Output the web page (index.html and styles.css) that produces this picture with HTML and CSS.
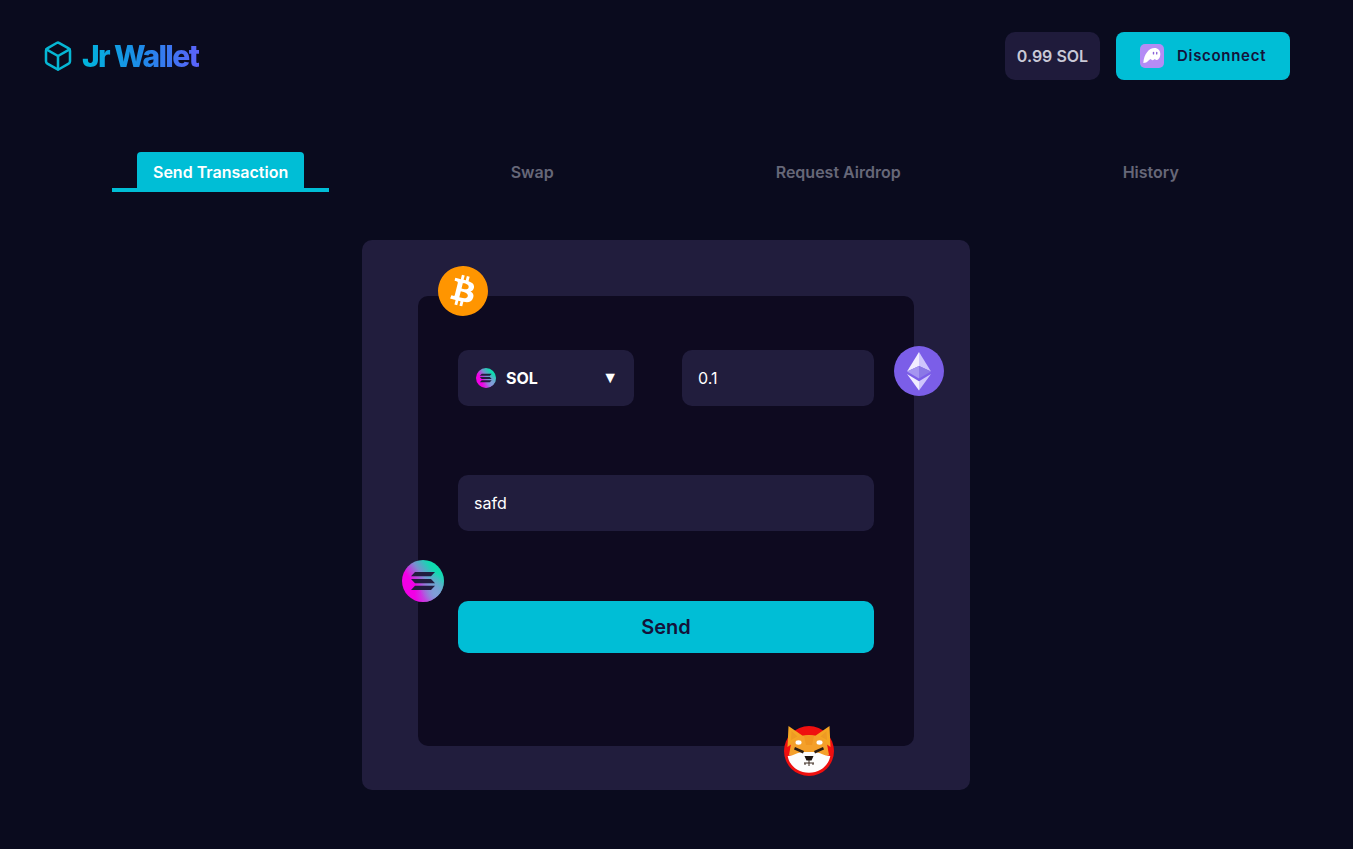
FILE: index.html
```html
<!DOCTYPE html>
<html lang="en">
<head>
  <meta charset="utf-8">
  <title>Jr Wallet</title>
  <link rel="stylesheet" href="styles.css">
</head>
<body>
  <header class="header">
    <div class="logo">
      <svg class="logo-icon" viewBox="0 0 24 24" fill="none" stroke="currentColor" stroke-width="1.9" stroke-linecap="round" stroke-linejoin="round">
        <path d="M21 16V8a2 2 0 0 0-1-1.73l-7-4a2 2 0 0 0-2 0l-7 4A2 2 0 0 0 3 8v8a2 2 0 0 0 1 1.73l7 4a2 2 0 0 0 2 0l7-4A2 2 0 0 0 21 16z"/>
        <polyline points="3.27 6.96 12 12.01 20.73 6.96"/>
        <line x1="12" y1="22.08" x2="12" y2="12"/>
      </svg>
      <span class="logo-text">Jr Wallet</span>
    </div>
    <div class="account">
      <div class="balance">0.99 SOL</div>
      <button class="disconnect">
        <svg class="phantom" viewBox="0 0 24 24">
          <rect width="24" height="24" rx="5" fill="#b48cf5"/>
          <path d="M3.300 19C4 10 9 4 14.500 4C18 4 20.300 6.500 20.300 10C20.300 13.500 18.500 16 16.500 16C15.500 16 15.200 15 14.700 15C14.200 15 13.700 16.300 12.500 16.300C11.500 16.300 11.300 15 10.700 15C9 15 8 19 3.300 19Z" fill="#fff"/>
          <rect x="12.800" y="7.800" width="1.400" height="2.800" rx=".7" fill="#8a63d8"/>
          <rect x="16" y="7.800" width="1.400" height="2.800" rx=".7" fill="#8a63d8"/>
        </svg>
        Disconnect
      </button>
    </div>
  </header>

  <nav class="tabs">
    <div class="tab active"><a>Send Transaction</a></div>
    <div class="tab"><a>Swap</a></div>
    <div class="tab"><a>Request Airdrop</a></div>
    <div class="tab"><a>History</a></div>
  </nav>

  <main class="outer-card">
    <div class="inner-card">
      <div class="row">
        <div class="select">
          <svg class="sol-small" viewBox="0 0 42 42">
            <defs>
              <linearGradient id="solSmall" x1="0.1" y1="0.75" x2="0.9" y2="0.15">
                <stop offset="0.25" stop-color="#f200e6"/>
                <stop offset="0.55" stop-color="#7a8fd0"/>
                <stop offset="0.85" stop-color="#0fdcb0"/>
              </linearGradient>
              <radialGradient id="solSmallGlow" cx="0.8" cy="0.8" r="0.5">
                <stop offset="0" stop-color="#7fa0d8"/>
                <stop offset="1" stop-color="#7fa0d8" stop-opacity="0"/>
              </radialGradient>
            </defs>
            <circle cx="21" cy="21" r="21" fill="url(#solSmall)"/>
            <circle cx="21" cy="21" r="21" fill="url(#solSmallGlow)"/>
            <path d="M12 12h21l-4 4.500H8zM8 18.700h21l4 4.500H12zM12 25.500h21l-4 4.500H8z" fill="#221c3e"/>
          </svg>
          <span class="select-label">SOL</span>
          <span class="caret">▼</span>
        </div>
        <input class="field amount" type="text" value="0.1">
      </div>
      <input class="field address" type="text" value="safd">
      <button class="send">Send</button>

      <svg class="coin coin-btc" viewBox="0 0 24 24">
        <circle cx="12" cy="12" r="9" fill="#fff"/>
        <path fill="#ff9500" d="M23.638 14.904c-1.602 6.43-8.113 10.34-14.542 8.736C2.67 22.05-1.244 15.525.362 9.105 1.962 2.67 8.475-1.243 14.9.358c6.43 1.605 10.342 8.115 8.738 14.548v-.002zm-6.35-4.613c.24-1.59-.974-2.45-2.64-3.03l.54-2.153-1.315-.33-.525 2.107c-.345-.087-.705-.167-1.064-.25l.526-2.127-1.32-.33-.54 2.165c-.285-.067-.565-.132-.84-.2l-1.815-.45-.35 1.407s.975.225.955.236c.535.136.63.486.615.766l-1.477 5.92c-.075.166-.24.406-.614.314.015.02-.96-.24-.96-.24l-.66 1.51 1.71.426.93.242-.54 2.19 1.32.327.54-2.17c.36.1.705.19 1.05.273l-.51 2.154 1.32.33.545-2.19c2.24.427 3.93.257 4.64-1.774.57-1.637-.03-2.58-1.217-3.196.854-.193 1.5-.76 1.68-1.93h.01zm-3.01 4.22c-.404 1.64-3.157.75-4.05.53l.72-2.9c.896.23 3.757.67 3.33 2.37zm.41-4.24c-.37 1.49-2.662.735-3.405.55l.654-2.64c.744.18 3.137.524 2.75 2.084v.006z"/>
      </svg>

      <svg class="coin coin-eth" viewBox="0 0 50 50">
        <circle cx="25" cy="25" r="25" fill="#7b5ee8"/>
        <polygon points="25,6 13,25.500 25,20" fill="#f1edff"/>
        <polygon points="25,6 37,25.500 25,20" fill="#cfc5fc"/>
        <polygon points="13,25.500 25,20 25,32.500" fill="#a595f0"/>
        <polygon points="37,25.500 25,20 25,32.500" fill="#8b78e6"/>
        <polygon points="13,28 25,35.200 25,44.500" fill="#f1edff"/>
        <polygon points="37,28 25,35.200 25,44.500" fill="#cfc5fc"/>
      </svg>

      <svg class="coin coin-sol" viewBox="0 0 42 42">
        <defs>
          <linearGradient id="solBig" x1="0.1" y1="0.75" x2="0.9" y2="0.15">
            <stop offset="0.25" stop-color="#f200e6"/>
            <stop offset="0.55" stop-color="#7a8fd0"/>
            <stop offset="0.85" stop-color="#0fdcb0"/>
          </linearGradient>
          <radialGradient id="solBigGlow" cx="0.8" cy="0.8" r="0.5">
            <stop offset="0" stop-color="#7fa0d8"/>
            <stop offset="1" stop-color="#7fa0d8" stop-opacity="0"/>
          </radialGradient>
        </defs>
        <circle cx="21" cy="21" r="21" fill="url(#solBig)"/>
        <circle cx="21" cy="21" r="21" fill="url(#solBigGlow)"/>
        <path d="M13 12h20l-4 4.300H9zM9 18.900h20l4 4.300H13zM13 25.700h20l-4 4.300H9z" fill="#221c3e"/>
      </svg>

      <svg class="coin coin-shib" viewBox="0 0 50 50">
        <circle cx="25" cy="25" r="25" fill="#ef0f0f"/>
        <path d="M3.500 21 4.500 0 19 10zM46.500 21 45.500 0 31 10z" fill="#f5a623"/>
        <path d="M7 14 7.500 5l6 5.500zM43 14l-.5-9-6 5.500z" fill="#ee9a24"/>
        <path d="M7 18c4-6 10-9 18-9s14 3 18 9l2 11-20 7-20-7z" fill="#f4a02a"/>
        <path d="M3.700 30c6 0 10-4 15-4h12c5 0 9 4 15.600 4-1.500 9-10 16.800-21.300 16.800S5 39 3.700 30z" fill="#fdfdfd"/>
        <path d="M20 10c2-.6 8-.6 10 0l-2 9h-6z" fill="#f09621"/>
        <ellipse cx="14.500" cy="16.500" rx="3" ry="2.200" fill="#fff"/>
        <ellipse cx="35.500" cy="16.500" rx="3" ry="2.200" fill="#fff"/>
        <path d="M11 21l9 4-1 2.500-9-4zM39 21l-9 4 1 2.500 9-4z" fill="#2a1c12"/>
        <path d="M20.500 30h9l-2 4.500h-5z" fill="#1c1410"/>
        <path d="M25 34v3M20 37h10M21 37v2M25 37v3M29 37v2" stroke="#3a2a20" stroke-width="1" fill="none"/>
      </svg>
    </div>
  </main>
</body>
</html>
```
FILE: styles.css
```css
html, body {
  margin: 0;
  height: 100%;
}
body {
  background: #0a0b1e;
  font-family: "Inter", sans-serif;
  overflow: hidden;
}
.header {
  display: flex;
  justify-content: space-between;
  align-items: center;
  height: 48px;
  padding: 32px 63px 0 44px;
}
.logo {
  display: flex;
  align-items: center;
  gap: 8px;
}
.logo-icon {
  width: 32px;
  height: 32px;
  margin-left: -2px;
  color: #06b6d4;
}
.logo-text {
  font-size: 30px;
  font-weight: 800;
  letter-spacing: -1.6px;
  background: linear-gradient(90deg, #00b6dc, #1d8be8 50%, #5b62fa);
  -webkit-background-clip: text;
  background-clip: text;
  color: transparent;
}
.account {
  display: flex;
  gap: 16px;
}
.balance {
  display: flex;
  align-items: center;
  justify-content: center;
  width: 95px;
  height: 48px;
  background: #1f1b3b;
  border-radius: 10px;
  color: #c9c9d6;
  font-size: 16px;
  font-weight: 600;
}
.disconnect {
  display: flex;
  align-items: center;
  gap: 13px;
  width: 174px;
  height: 48px;
  padding: 0 24px 2px;
  border: none;
  border-radius: 8px;
  background: #00bed6;
  color: #14123a;
  font-family: "Inter", sans-serif;
  font-size: 15px;
  font-weight: 600;
  letter-spacing: .7px;
}
.phantom {
  width: 24px;
  height: 24px;
  margin-top: 2px;
  flex: none;
}
.tabs {
  display: flex;
  gap: 140px;
  margin-top: 72px;
  padding-left: 112px;
}
.tab {
  display: flex;
  padding: 0 25px;
  border-bottom: 4px solid transparent;
}
.tab a {
  padding: 4px 16px 0;
  line-height: 32px;
  font-size: 16px;
  font-weight: 600;
  color: #666778;
  border-radius: 4px 4px 0 0;
}
.tab.active {
  margin-right: .5px;
  border-bottom-color: #00bed6;
}
.tab.active a {
  background: #00bed6;
  color: #fff;
}
.outer-card {
  width: 496px;
  height: 450px;
  margin: 48px 0 0 362px;
  padding: 56px 56px 44px;
  background: #211d3d;
  border-radius: 10px;
}
.inner-card {
  position: relative;
  display: flex;
  flex-direction: column;
  height: 450px;
  padding: 54px 40px 0;
  box-sizing: border-box;
  background: #0e0a20;
  border-radius: 10px;
}
.row {
  display: flex;
  justify-content: space-between;
}
.select {
  display: flex;
  align-items: center;
  width: 176px;
  height: 56px;
  padding: 0 16px 0 18px;
  box-sizing: border-box;
  background: #211d3d;
  border-radius: 10px;
  color: #fff;
  font-size: 16px;
  font-weight: 700;
}
.sol-small {
  width: 20px;
  height: 20px;
  margin-right: 10px;
}
.select-label {
  flex: 1;
}
.caret {
  font-family: "Liberation Sans", sans-serif;
  font-size: 16px;
}
.field {
  height: 56px;
  padding: 0 16px;
  box-sizing: border-box;
  border: none;
  outline: none;
  background: #211d3d;
  border-radius: 10px;
  color: #fff;
  font-family: "Inter", sans-serif;
  font-size: 16px;
}
.amount {
  width: 192px;
}
.address {
  width: 416px;
  margin-top: 69px;
}
.send {
  width: 416px;
  height: 52px;
  margin-top: 70px;
  border: none;
  border-radius: 10px;
  background: #00bed6;
  color: #14123a;
  font-family: "Inter", sans-serif;
  font-size: 20px;
  font-weight: 600;
}
.coin {
  position: absolute;
}
.coin-btc {
  left: 20px;
  top: -30px;
  width: 50px;
  height: 50px;
}
.coin-eth {
  left: 476px;
  top: 50px;
  width: 50px;
  height: 50px;
}
.coin-sol {
  left: -16px;
  top: 264px;
  width: 42px;
  height: 42px;
}
.coin-shib {
  left: 366px;
  top: 430px;
  width: 50px;
  height: 50px;
}
```
